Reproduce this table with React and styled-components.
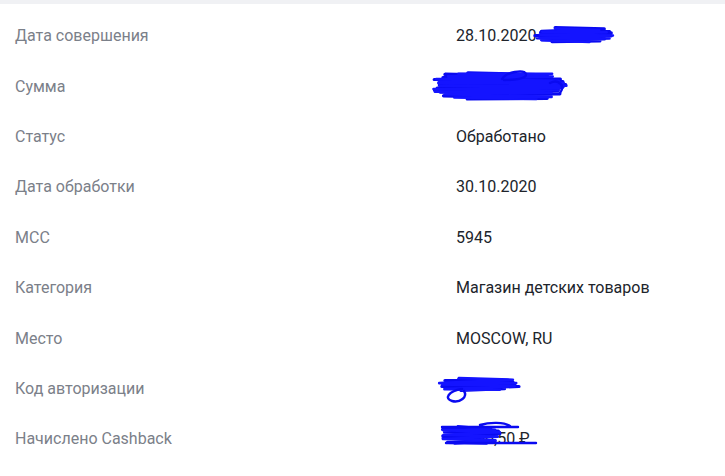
import React from "react";
import styled, { createGlobalStyle } from "styled-components";

const Global = createGlobalStyle`
  html, body { margin: 0; padding: 0; background: #fff; }
  body { font-family: Roboto, "Noto Sans", sans-serif; }
`;

const Page = styled.div`
  width: 725px;
  height: 476px;
  overflow: hidden;
  background: #fff;
`;

const TopBand = styled.div`
  height: 4px;
  background: #f0f1f4;
`;

const List = styled.div`
  padding-top: 7px;
  display: flex;
  flex-direction: column;
`;

const Row = styled.div`
  display: grid;
  grid-template-columns: 441px 1fr;
  align-items: center;
  height: 50.4px;
  padding-left: 15px;
  font-size: 16px;
  line-height: 20px;
`;

const Label = styled.div`
  color: #7b8089;
`;

const Value = styled.div`
  position: relative;
  color: #20242b;
  height: 20px;
`;

const ScribbleSvg = styled.svg`
  position: absolute;
  overflow: visible;
  pointer-events: none;
`;

function scribblePath(w, h, n, seed) {
  let s = seed;
  const rnd = () => {
    s = (s * 9301 + 49297) % 233280;
    return s / 233280;
  };
  const pts = [];
  for (let k = 0; k <= n; k++) {
    const t = k / n;
    const y = 2 + t * (h - 4) + (rnd() - 0.5) * 2;
    const e = Math.sqrt(Math.max(0, 1 - Math.pow(2 * t - 1, 2)));
    const half = (w / 2) * (0.55 + 0.45 * e);
    const cx = w / 2 + (rnd() - 0.5) * w * 0.08;
    const x = k % 2 === 0 ? cx - half + rnd() * 4 : cx + half - rnd() * 4;
    pts.push([x.toFixed(1), y.toFixed(1)]);
  }
  return "M" + pts.map((p) => p.join(" ")).join(" L");
}

function Scribble({ left, top, w, h, n = 14, seed = 7, loop }) {
  return (
    <ScribbleSvg
      width={w}
      height={h}
      viewBox={`0 0 ${w} ${h}`}
      style={{ left, top }}
    >
      <path
        d={scribblePath(w, h, n, seed)}
        fill="none"
        stroke="#0a0af0"
        strokeWidth="3.2"
        strokeLinejoin="round"
        strokeLinecap="round"
      />
      <path
        d={scribblePath(w, h, n - 3, seed + 11)}
        fill="none"
        stroke="#1414ff"
        strokeWidth="2.6"
        strokeLinejoin="round"
        strokeLinecap="round"
      />
      {loop && (
        <path
          d={loop}
          fill="none"
          stroke="#0a0af0"
          strokeWidth="2.4"
          strokeLinecap="round"
        />
      )}
    </ScribbleSvg>
  );
}

const rows = [
  {
    label: "Дата совершения",
    value: "28.10.2020",
    scribble: { left: 80, top: 0, w: 76, h: 18, n: 12, seed: 3 },
  },
  {
    label: "Сумма",
    value: "",
    scribble: {
      left: -24,
      top: -6,
      w: 132,
      h: 30,
      n: 22,
      seed: 5,
      loop: "M70 8 C 74 1, 92 -2, 94 3 C 95 8, 82 9, 72 9 M118 12 C 126 8, 134 14, 128 22",
    },
  },
  { label: "Статус", value: "Обработано" },
  { label: "Дата обработки", value: "30.10.2020" },
  { label: "MCC", value: "5945" },
  { label: "Категория", value: "Магазин детских товаров" },
  { label: "Место", value: "MOSCOW, RU" },
  {
    label: "Код авторизации",
    value: "",
    scribble: {
      left: -16,
      top: -2,
      w: 78,
      h: 15,
      n: 10,
      seed: 9,
      loop: "M22 12 C 8 14, 4 22, 12 24 C 20 26, 28 20, 24 14",
    },
  },
  {
    label: "Начислено Cashback",
    value: "00,50 ₽",
    valueIndent: 20,
    scribble: {
      left: -16,
      top: -4,
      w: 62,
      h: 20,
      n: 11,
      seed: 13,
      loop: "M2 2 L 78 2 M6 18 L 96 18 M40 0 C 50 -3, 64 -3, 70 1",
    },
  },
];

const ValueText = styled.span`
  display: inline-block;
  padding-left: ${(p) => p.$indent || 0}px;
`;

export default function App() {
  return (
    <Page>
      <Global />
      <TopBand />
      <List>
        {rows.map((r) => (
          <Row key={r.label}>
            <Label>{r.label}</Label>
            <Value>
              <ValueText $indent={r.valueIndent}>{r.value}</ValueText>
              {r.scribble && <Scribble {...r.scribble} />}
            </Value>
          </Row>
        ))}
      </List>
    </Page>
  );
}
